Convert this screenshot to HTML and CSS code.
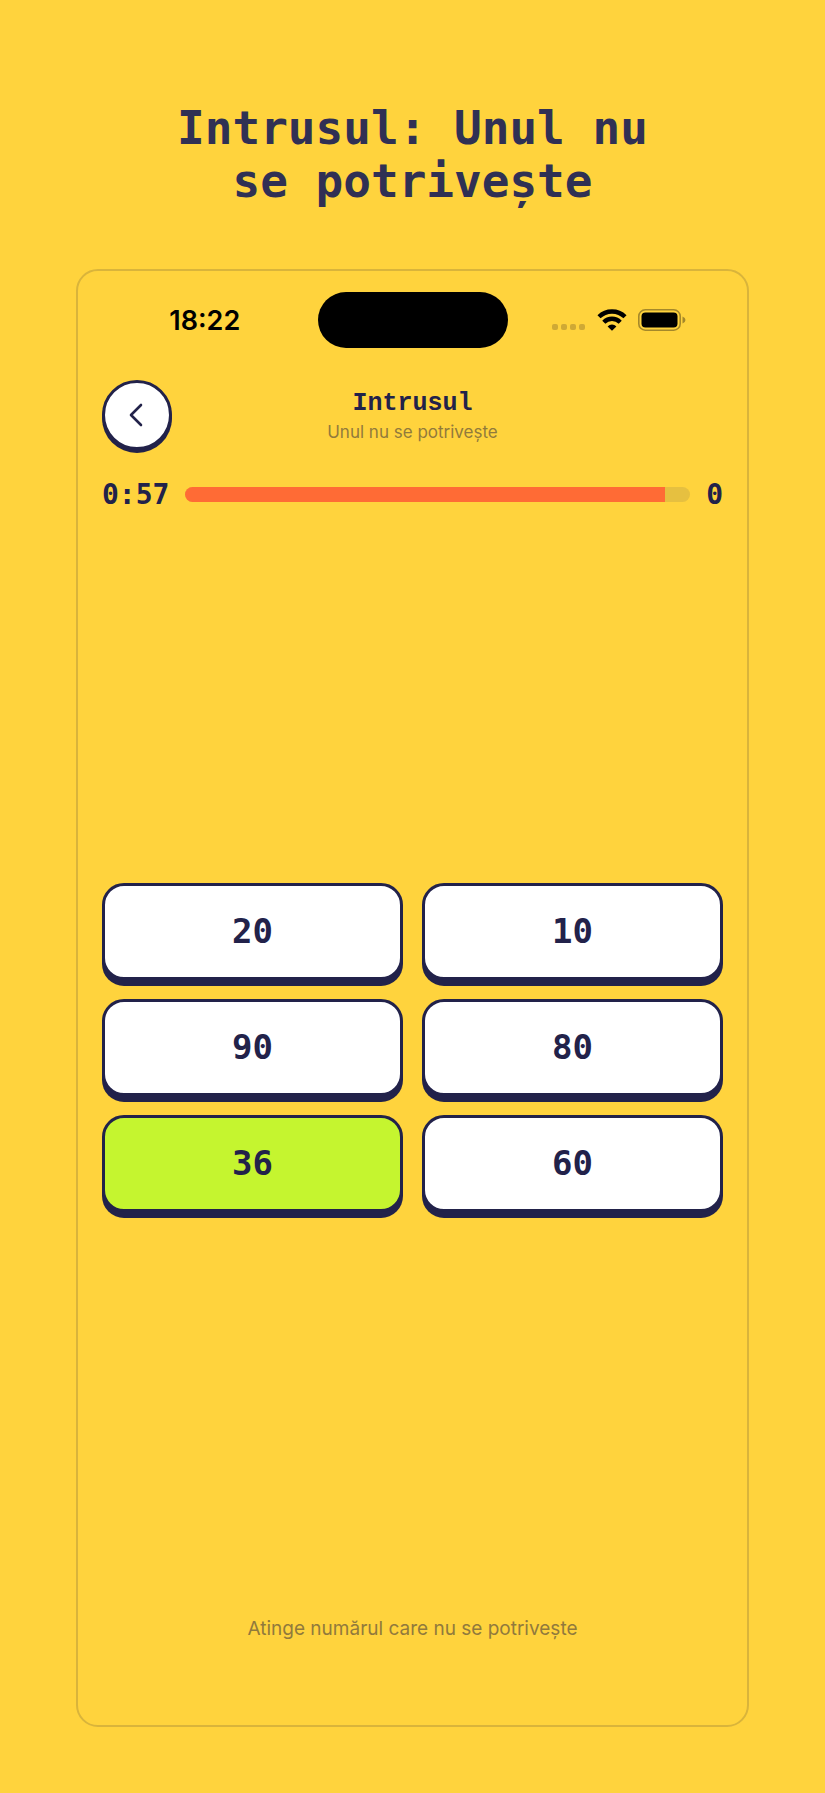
FILE: index.html
```html
<!DOCTYPE html>
<html lang="ro">

<head>
    <meta charset="UTF-8" />
    <meta name="viewport" content="width=device-width, initial-scale=1.0" />
    <title>Intrusul: Unul nu se potrivește</title>
    <link rel="stylesheet" href="styles.css">
</head>

<body>
    <h1 class="headline">Intrusul: Unul nu se potrivește</h1>

    <main class="phone">
        <div class="status-bar">
            <span class="clock">18:22</span>
            <div class="island"></div>
            <div class="status-icons">
                <svg class="signal" width="34" height="22" viewBox="0 0 34 22" aria-hidden="true">
                    <rect x="0" y="15" width="6" height="6" rx="2" />
                    <rect x="9" y="15" width="6" height="6" rx="2" />
                    <rect x="18" y="15" width="6" height="6" rx="2" />
                    <rect x="27" y="15" width="6" height="6" rx="2" />
                </svg>
                <svg class="wifi" width="30" height="22" viewBox="0 0 30 22" aria-hidden="true">
                    <path class="arc" d="M2 7.8 A18.5 18.5 0 0 1 28 7.8" />
                    <path class="arc" d="M6.8 13.2 A11.6 11.6 0 0 1 23.2 13.2" />
                    <path d="M15 21.8 L10.6 17.4 A6.2 6.2 0 0 1 19.4 17.4 Z" />
                </svg>
                <svg class="battery" width="48" height="22" viewBox="0 0 48 22" aria-hidden="true">
                    <rect class="shell" x="0.8" y="0.8" width="41.4" height="20.4" rx="6.5" />
                    <rect x="3.5" y="3.5" width="36" height="15" rx="4" />
                    <path class="nub" d="M44.5 7.5 Q47.5 8.6 47.5 11 Q47.5 13.4 44.5 14.5 Z" />
                </svg>
            </div>
        </div>

        <header class="game-header">
            <button class="back-btn" type="button" aria-label="Înapoi">
                <svg width="14" height="24" viewBox="0 0 14 24" aria-hidden="true">
                    <path d="M12 2 L2 12 L12 22" />
                </svg>
            </button>
            <div class="game-title">
                <h2>Intrusul</h2>
                <p>Unul nu se potrivește</p>
            </div>
        </header>

        <div class="progress-row">
            <span class="counter">0:57</span>
            <div class="progress">
                <div class="progress-fill" style="width: 95%"></div>
            </div>
            <span class="counter">0</span>
        </div>

        <div class="board">
            <button class="tile" type="button">20</button>
            <button class="tile" type="button">10</button>
            <button class="tile" type="button">90</button>
            <button class="tile" type="button">80</button>
            <button class="tile selected" type="button">36</button>
            <button class="tile" type="button">60</button>
        </div>

        <p class="hint">Atinge numărul care nu se potrivește</p>
    </main>
</body>

</html>
```

FILE: styles.css
```css
* {
    margin: 0;
    padding: 0;
    box-sizing: border-box;
}

body {
    display: flex;
    flex-direction: column;
    min-height: 100vh;
    padding: 102px 76px 66px;
    background: #ffd33d;
    color: #22224a;
    font-family: Inter, "Liberation Sans", sans-serif;
}

.headline {
    max-width: 520px;
    margin: 0 auto 61px;
    color: #303054;
    font-family: "DejaVu Sans Mono", "Liberation Mono", monospace;
    font-size: 46px;
    line-height: 53px;
    text-align: center;
}

.phone {
    flex: 1;
    display: flex;
    flex-direction: column;
    padding: 21px 24px 84px;
    border: 2px solid #d9b43b;
    border-radius: 22px;
}

/* Status bar */
.status-bar {
    display: grid;
    grid-template-columns: 1fr 190px 1fr;
    align-items: center;
}

.clock {
    padding-right: 10px;
    color: #000;
    font-size: 27px;
    font-weight: 600;
    text-align: center;
}

.island {
    height: 56px;
    border-radius: 28px;
    background: #000;
}

.status-icons {
    display: flex;
    justify-content: flex-end;
    gap: 11px;
    padding-right: 37px;
}

.signal {
    fill: #cfa935;
}

.wifi .arc {
    fill: none;
    stroke: #000;
    stroke-width: 4.4;
}

.battery .shell {
    fill: none;
    stroke: #a5882a;
    stroke-width: 1.6;
}

.battery .nub {
    fill: #a5882a;
}

/* Header */
.game-header {
    display: grid;
    grid-template-columns: 70px 1fr 70px;
    align-items: center;
    margin-top: 32px;
}

.back-btn {
    display: flex;
    align-items: center;
    justify-content: center;
    width: 70px;
    height: 70px;
    padding-right: 2px;
    border: 3px solid #22224a;
    border-radius: 50%;
    background: #fff;
    box-shadow: 0 3px 0 #22224a;
    cursor: pointer;
}

.back-btn path {
    fill: none;
    stroke: #22224a;
    stroke-width: 2.6;
    stroke-linecap: round;
    stroke-linejoin: round;
}

.game-title {
    padding-top: 4px;
    text-align: center;
}

.game-title h2 {
    font-family: "Liberation Mono", monospace;
    font-size: 25px;
    line-height: 30px;
}

.game-title p {
    color: #917a3c;
    font-size: 17px;
    line-height: 26px;
}

/* Timer, progress and score */
.progress-row {
    display: flex;
    align-items: center;
    gap: 16px;
    margin-top: 27px;
}

.counter {
    padding-top: 2px;
    font-family: "DejaVu Sans Mono", "Liberation Mono", monospace;
    font-size: 28px;
    font-weight: 700;
    line-height: 32px;
}

.progress {
    flex: 1;
    height: 15px;
    border-radius: 8px;
    background: #e6c040;
    overflow: hidden;
}

.progress-fill {
    height: 100%;
    background: #ff6b35;
}

/* Number tiles */
.board {
    flex: 1;
    display: grid;
    grid-template-columns: 1fr 1fr;
    align-content: center;
    gap: 19px;
    padding-bottom: 34px;
}

.tile {
    height: 97px;
    border: 3px solid #22224a;
    border-radius: 22px;
    background: #fff;
    box-shadow: 0 6px 0 #22224a;
    color: #22224a;
    font-family: "DejaVu Sans Mono", "Liberation Mono", monospace;
    font-size: 34px;
    font-weight: 700;
    cursor: pointer;
}

.tile.selected {
    background: #c5f52f;
}

.hint {
    color: #917a3c;
    font-size: 19px;
    line-height: 24px;
    text-align: center;
}
```
